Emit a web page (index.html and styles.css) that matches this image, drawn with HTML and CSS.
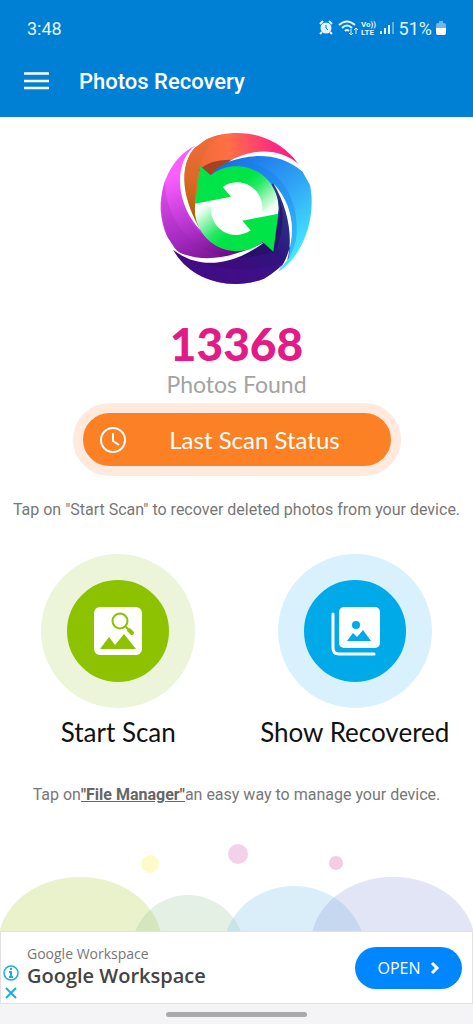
FILE: index.html
```html
<!DOCTYPE html>
<html lang="en">
<head>
    <meta charset="UTF-8">
    <meta name="viewport" content="width=device-width, initial-scale=1.0">
    <title>Photos Recovery</title>
    <link rel="stylesheet" href="styles.css">
</head>
<body>
    <header class="app-header">
        <div class="status-bar">
            <span class="clock">3:48</span>
            <div class="status-icons">
                <svg width="76" height="18" viewBox="0 0 76 18" fill="none" stroke="#e3f2fd" stroke-width="2">
                    <path d="M1 5L4 2M13 5L10 2" stroke-width="2"/>
                    <circle cx="7" cy="9" r="5.5" fill="#e3f2fd" stroke="none"/>
                    <path d="M3 13L1 15M11 13L13 15"/>
                    <path d="M7 6V9L9 11" stroke="#0080d5" stroke-width="1"/>
                    <path d="M20 6Q28 -1 36 6M23 9Q28 4 33 9M26 12Q28 10 30 12"/>
                    <path d="M32 10V16M30 14L32 16L34 14M37 15V9M35 11L37 9L39 11" stroke-width="1"/>
                    <g fill="#e3f2fd" stroke="none" font-family="Roboto, sans-serif" font-size="8" font-weight="700">
                        <text x="42" y="8">Vo))</text>
                        <text x="42" y="16">LTE</text>
                    </g>
                    <path d="M62 15V12M66 15V9M70 15V6"/>
                    <path d="M74 15V3" stroke="#62aee4"/>
                </svg>
                <span>51%</span>
                <svg width="10" height="14" viewBox="0 0 10 14">
                    <path d="M3 0H7V2H8Q10 2 10 4V7H0V4Q0 2 2 2H3Z" fill="#70b7e8"/>
                    <path d="M0 7H10V12Q10 14 8 14H2Q0 14 0 12Z" fill="#fff"/>
                </svg>
            </div>
        </div>
        <div class="toolbar">
            <button class="menu-btn" aria-label="Menu">
                <svg width="26" height="18" viewBox="0 0 26 18" stroke="#fff" stroke-width="2.5">
                    <path d="M0 1.5H25M0 9H25M0 16H25"/>
                </svg>
            </button>
            <h1>Photos Recovery</h1>
        </div>
    </header>

    <main>
        <svg class="logo" viewBox="0 0 522 525">
            <defs>
                <linearGradient id="magenta" x1="0.2" y1="0" x2="0.6" y2="1">
                    <stop offset="0.2" stop-color="#fb5eff"/>
                    <stop offset="0.7" stop-color="#a82dc4"/>
                    <stop offset="1" stop-color="#680b83"/>
                </linearGradient>
                <linearGradient id="orange" x1="0" y1="0.3" x2="1" y2="0.2">
                    <stop offset="0" stop-color="#e9652f"/>
                    <stop offset="0.4" stop-color="#ff7044"/>
                    <stop offset="0.8" stop-color="#ff2885"/>
                    <stop offset="1" stop-color="#ff1680"/>
                </linearGradient>
                <linearGradient id="brown" x1="0.4" y1="0" x2="0.3" y2="1">
                    <stop offset="0" stop-color="#f16b3d"/>
                    <stop offset="0.5" stop-color="#d96a25"/>
                    <stop offset="1" stop-color="#a06000"/>
                </linearGradient>
                <linearGradient id="blue" x1="0.1" y1="0" x2="0.8" y2="1">
                    <stop offset="0" stop-color="#1668e4"/>
                    <stop offset="0.5" stop-color="#2fa2f6"/>
                    <stop offset="1" stop-color="#4af4ff"/>
                </linearGradient>
                <linearGradient id="indigo" x1="0" y1="0.7" x2="1" y2="0">
                    <stop offset="0" stop-color="#49047d"/>
                    <stop offset="0.6" stop-color="#30147e"/>
                    <stop offset="1" stop-color="#264891"/>
                </linearGradient>
                <linearGradient id="arrow" gradientUnits="userSpaceOnUse" x1="290" y1="180" x2="365" y2="265">
                    <stop offset="0" stop-color="#00e447"/>
                    <stop offset="0.3" stop-color="#28e965"/>
                    <stop offset="1" stop-color="#f4fff7"/>
                </linearGradient>
            </defs>
            <!-- magenta blade -->
            <path d="M135 78C75 105 30 180 32 270Q35 315 52 350L74 384C120 440 250 430 345 365L250 300L155 330C85 250 75 150 135 78Z" fill="url(#magenta)"/>
            <path d="M47 170C35 270 110 400 240 410Q130 440 74 384L52 350Q20 260 47 170Z" fill="#9c24b2" opacity="0.25"/>
            <path d="M100 250C110 320 180 390 310 380L155 320Z" fill="#c33eea" opacity="0.5"/>
            <!-- orange blade -->
            <path d="M450 140C420 90 350 35 250 39Q205 42 170 58L135 83C85 135 90 250 153 330L260 266C250 120 350 70 450 140Z" fill="url(#orange)"/>
            <path d="M220 43Q155 75 140 180L134 250L153 330C90 250 85 135 135 83L170 58Q195 46 220 43Z" fill="url(#brown)"/>
            <path d="M145 150Q185 115 255 120Q215 135 180 170Z" fill="#a34224"/>
            <!-- blue blade -->
            <path d="M240 122C300 95 400 95 456 152L480 195C500 290 460 410 385 455C430 380 430 265 370 195L260 266L180 165Q205 140 240 122Z" fill="url(#blue)"/>
            <path d="M285 130C370 130 455 220 438 360Q428 410 385 455C430 380 430 265 370 195Z" fill="#1479ed" opacity="0.35"/>
            <!-- indigo blade -->
            <path d="M370 190C415 245 430 340 415 415Q385 452 342 476C240 515 120 480 70 390C150 440 245 425 345 365L260 266Z" fill="url(#indigo)"/>
            <path d="M385 230C400 290 390 390 240 410Q280 420 375 395Q415 300 385 230Z" fill="#241064" opacity="0.7"/>
            <path d="M413 417C360 450 260 460 160 430Q110 430 70 390C120 480 240 515 342 476Q385 450 413 417Z" fill="#41118c" opacity="0.6"/>
            <!-- gaps between the blades -->
            <g fill="#fff">
                <path d="M137 75C65 130 80 260 153 332C100 245 80 140 137 75Z"/>
                <path d="M450 136C390 80 300 85 235 125C310 100 390 98 458 155Z"/>
                <path d="M383 458C440 380 445 270 370 190C415 265 430 355 412 420Z"/>
                <path d="M67 387C140 450 250 440 345 365C250 415 150 435 67 387Z"/>
            </g>
            <circle cx="260" cy="266" r="125" fill="#fff"/>
            <g id="half">
                <path d="M150 137L182 166A125 125 0 0 1 384 281L336 272A75 75 0 0 0 218 201L243 230L135 251Z" fill="url(#arrow)"/>
            </g>
            <use href="#half" transform="rotate(180 260 266)"/>
        </svg>

        <div class="count">13368</div>
        <div class="count-label">Photos Found</div>

        <button class="status-btn">
            <svg width="28" height="28" viewBox="0 0 28 28" fill="none" stroke="#fff" stroke-width="2">
                <circle cx="14" cy="14" r="12"/>
                <path d="M14 7V15L20 19"/>
            </svg>
            <span>Last Scan Status</span>
        </button>

        <p class="hint">Tap on "Start Scan" to recover deleted photos from your device.</p>

        <div class="actions">
            <button class="action">
                <span class="ring green">
                    <svg width="50" height="50" viewBox="0 0 50 50">
                        <rect x="1" y="1" width="48" height="48" rx="6" fill="#fff"/>
                        <path d="M7 43L16 31L22 39L31 28L43 43Z" fill="#8cc200"/>
                        <circle cx="27" cy="15" r="7.5" fill="none" stroke="#8cc200" stroke-width="2"/>
                        <path d="M32 20L35 23" stroke="#8cc200" stroke-width="2"/>
                        <path d="M36 24L39 27" stroke="#8cc200" stroke-width="4" stroke-linecap="round"/>
                    </svg>
                </span>
                <span>Start Scan</span>
            </button>
            <button class="action">
                <span class="ring blue">
                    <svg width="50" height="50" viewBox="0 0 50 50">
                        <rect x="9" y="1" width="41" height="41" rx="5" fill="#fff"/>
                        <path d="M3 8V42Q3 48 9 48H44" fill="none" stroke="#fff" stroke-width="3" stroke-linecap="round"/>
                        <circle cx="26" cy="19" r="4" fill="#00a9e7"/>
                        <path d="M17 35L23 27L27 31L33 24L41 35Z" fill="#00a9e7"/>
                    </svg>
                </span>
                <span>Show Recovered</span>
            </button>
        </div>

        <p class="hint file-hint">Tap on<a href="#">"File Manager"</a>an easy way to manage your device.</p>
    </main>

    <svg class="bubbles" viewBox="0 0 473 90">
        <ellipse cx="80" cy="103" rx="82" ry="67" fill="#eaf2cc"/>
        <ellipse cx="188" cy="112" rx="57" ry="58" fill="#9dc99f" opacity="0.28"/>
        <ellipse cx="294" cy="111" rx="71" ry="66" fill="#8dcced" opacity="0.33"/>
        <ellipse cx="393" cy="103" rx="82" ry="67" fill="#8c97d6" opacity="0.25"/>
        <circle cx="150" cy="23" r="9" fill="#fffbc9"/>
        <circle cx="238" cy="13" r="10" fill="#f4d1ea"/>
        <circle cx="336" cy="22" r="7" fill="#f7cbe4"/>
    </svg>

    <footer>
        <div class="ad">
            <div class="ad-marks">
                <svg width="18" height="40" viewBox="0 0 18 40" fill="none" stroke="#18b0d8" stroke-width="2">
                    <circle cx="9" cy="10" r="7" stroke-width="1.5"/>
                    <path d="M9 5V7M7 9H9V14M7 14H11M4 25L14 35M14 25L4 35"/>
                </svg>
            </div>
            <div class="ad-text">
                <span class="ad-brand">Google Workspace</span>
                <strong>Google Workspace</strong>
            </div>
            <button class="open-btn">
                OPEN
                <svg width="10" height="14" viewBox="0 0 10 14" fill="none" stroke="#fff" stroke-width="3">
                    <path d="M2 2L7 7L2 12"/>
                </svg>
            </button>
        </div>
        <div class="nav-bar"><div class="nav-handle"></div></div>
    </footer>
</body>
</html>
```

FILE: styles.css
```css
* {
    box-sizing: border-box;
}

body {
    margin: 0;
    min-height: 100vh;
    display: flex;
    flex-direction: column;
    background-color: #fff;
    font-family: Roboto, sans-serif;
    color: #777;
}

button {
    border: none;
    padding: 0;
    background: none;
    font-family: inherit;
    cursor: pointer;
}

svg {
    display: block;
}

.app-header {
    background-color: #0080d5;
    color: #fff;
    height: 117px;
}

.status-bar {
    display: flex;
    justify-content: space-between;
    align-items: center;
    height: 56px;
    padding: 0 27px;
    font-size: 18px;
    color: #e3f2fd;
}

.status-icons {
    display: flex;
    align-items: center;
    gap: 4px;
}

.toolbar {
    display: flex;
    align-items: center;
    height: 50px;
    padding-left: 24px;
    gap: 29px;
}

h1 {
    margin: 0;
    font-size: 22px;
    font-weight: 500;
}

main {
    display: flex;
    flex-direction: column;
    align-items: center;
}

.logo {
    width: 174px;
    height: 175px;
    margin-top: 3px;
}

.count {
    margin-top: 24px;
    font-family: Lato, sans-serif;
    font-size: 46px;
    line-height: 50px;
    font-weight: 900;
    color: #e21b86;
}

.count-label {
    font-family: Lato, sans-serif;
    font-size: 23px;
    line-height: 30px;
    color: #a3a3a3;
}

.status-btn {
    display: flex;
    align-items: center;
    width: 328px;
    height: 73px;
    margin-top: 4px;
    padding: 0 27px 0 16px;
    border: 10px solid #ffeadd;
    border-radius: 37px;
    background-color: #fb8124;
    color: #fff;
    font-family: Lato, sans-serif;
    font-size: 24px;
}

.status-btn span {
    flex: 1;
    padding-left: 19px;
}

.hint {
    margin: 24px 0 0;
    font-size: 16px;
    line-height: 20px;
    white-space: nowrap;
}

.file-hint {
    margin-top: 37px;
}

.hint a {
    color: #666;
    font-weight: 700;
}

.actions {
    display: grid;
    grid-template-columns: 1fr 1fr;
    width: 100%;
    margin-top: 34px;
}

.action {
    display: flex;
    flex-direction: column;
    align-items: center;
    gap: 8px;
    font-family: Lato, sans-serif;
    font-size: 26px;
    line-height: 32px;
    color: #111;
}

.ring {
    display: flex;
    align-items: center;
    justify-content: center;
    width: 154px;
    height: 154px;
    border: 26px solid;
    border-radius: 50%;
}

.green {
    background-color: #8cc200;
    border-color: #ecf5d9;
}

.blue {
    background-color: #00a9e7;
    border-color: #d9f1fc;
}

.bubbles {
    width: 100%;
    margin-top: auto;
}

.ad {
    display: flex;
    align-items: center;
    height: 73px;
    padding-right: 10px;
    border: 1px solid #e2e2e4;
}

.ad-marks {
    align-self: flex-end;
    width: 26px;
    padding-left: 1px;
}

.ad-text {
    flex: 1;
    display: flex;
    flex-direction: column;
    padding-bottom: 4px;
    font-family: "Open Sans", sans-serif;
}

.ad-brand {
    font-size: 14px;
    line-height: 20px;
}

.ad-text strong {
    font-size: 20px;
    line-height: 24px;
    font-weight: 600;
    color: #444;
}

.open-btn {
    display: flex;
    align-items: center;
    justify-content: center;
    gap: 9px;
    width: 107px;
    height: 42px;
    border-radius: 21px;
    background-color: #0087ff;
    color: #fff;
    font-family: "Open Sans", sans-serif;
    font-size: 16px;
}

.nav-bar {
    display: flex;
    justify-content: center;
    align-items: center;
    height: 20px;
    background-color: #f4f4f7;
}

.nav-handle {
    width: 30%;
    height: 5px;
    border-radius: 3px;
    background-color: #aaa;
}
```
